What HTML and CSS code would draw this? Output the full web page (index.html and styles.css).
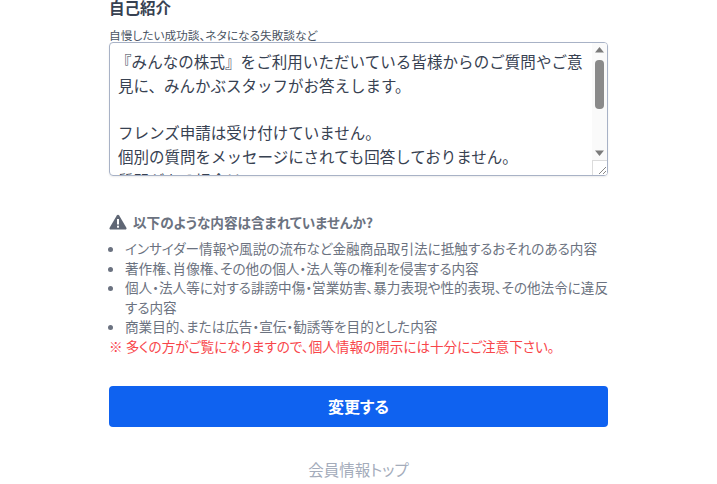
FILE: index.html
```html
<!DOCTYPE html>
<html lang="ja">
<head>
<meta charset="utf-8">
<title>自己紹介</title>
<link rel="stylesheet" href="styles.css">
</head>
<body>
<main class="page">
  <h2 class="title">自己紹介</h2>
  <p class="hint">自慢したい成功談、ネタになる失敗談など</p>
  <div class="textarea">
    <div class="textarea-text"><span class="first-line">『みんなの株式』をご利用いただいている皆様からのご質問やご意</span><br>見に、みんかぶスタッフがお答えします。<br><br>フレンズ申請は受け付けていません。<br>個別の質問をメッセージにされても回答しておりません。<br>質問がある場合は</div>
    <div class="scrollbar">
      <svg class="arrow" width="15" height="14" viewBox="0 0 15 14"><path d="M3 9.500 7.500 4 12 9.500z" fill="#7b7b7b"/></svg>
      <div class="track"><div class="thumb"></div></div>
      <svg class="arrow" width="15" height="14" viewBox="0 0 15 14"><path d="M3 4.500h9L7.500 10z" fill="#7b7b7b"/></svg>
      <div class="corner"><svg width="14" height="14" viewBox="0 0 14 14"><path d="M13 6 6 13M13 10l-3 3" stroke="#888" stroke-width="1" fill="none"/></svg></div>
    </div>
  </div>
  <section class="notice">
    <h3 class="notice-title">
      <svg width="18" height="16" viewBox="0 0 18 16"><path d="M9 .8c.5 0 .9.3 1.200.7l7.200 12.200c.5.900-.1 1.900-1.200 1.900H1.800C.7 15.600.1 14.600.6 13.700L7.800 1.500C8.100 1.100 8.500.8 9 .8z" fill="#5f6674"/><rect x="8" y="5" width="2" height="5.500" fill="#fff"/><rect x="8" y="11.700" width="2" height="2" fill="#fff"/></svg>
      <span>以下のような内容は含まれていませんか?</span>
    </h3>
    <ul class="notice-list">
      <li>インサイダー情報や風説の流布など金融商品取引法に抵触するおそれのある内容</li>
      <li>著作権、肖像権、その他の個人・法人等の権利を侵害する内容</li>
      <li>個人・法人等に対する誹謗中傷・営業妨害、暴力表現や性的表現、その他法令に違反する内容</li>
      <li>商業目的、または広告・宣伝・勧誘等を目的とした内容</li>
    </ul>
    <p class="warning">※ 多くの方がご覧になりますので、個人情報の開示には十分にご注意下さい。</p>
  </section>
  <button class="submit" type="button">変更する</button>
  <a class="back" href="#">会員情報トップ</a>
</main>
</body>
</html>
```
FILE: styles.css
```css
* { box-sizing: border-box; }
html, body { margin: 0; height: 484px; overflow: hidden; background: #fff; }
body { font-family: "Noto Sans CJK JP", "Noto Sans", sans-serif; color: #374151; }
.page { width: 499px; margin-left: 109px; display: flex; flex-direction: column; }
.title { margin: -3px 0 0; font-size: 15.500px; line-height: 20px; font-weight: 700; color: #374151; height: 30px; font-feature-settings: "palt"; }
.hint { margin: 0; font-size: 11.700px; line-height: 15px; color: #4b5563; font-feature-settings: "palt"; }
.textarea { position: relative; height: 134px; border: 1px solid #a8b2c6; border-radius: 4px; overflow: hidden; box-shadow: 0 1px 2px rgba(0,0,0,.08); }
.textarea-text { padding: 7px 16px 0 8px; font-size: 15.500px; line-height: 23.800px; color: #374151; }
.first-line { white-space: nowrap; margin-left: -2px; letter-spacing: .07px; }
.scrollbar { position: absolute; top: 0; right: 0; bottom: 0; width: 15px; background: #fafafa; display: flex; flex-direction: column; }
.arrow { display: block; flex: none; }
.track { flex: 1; padding: 3px 3px 0; }
.thumb { height: 49px; border-radius: 4px; background: #8a8a8a; }
.corner { flex: none; height: 15px; background: #fff; border: 1px solid #dcdcdc; border-width: 1px 0 0 1px; }
.corner svg { display: block; }
.notice { margin-top: 36px; font-feature-settings: "palt"; }
.notice-title { margin: 0; display: flex; align-items: center; gap: 6px; font-size: 13.600px; line-height: 20px; font-weight: 700; color: #6b7280; }
.notice-list { margin: 7px 0 0; padding: 0 0 0 16px; font-size: 13.600px; line-height: 19.500px; color: #6b7280; }
.notice-list li::marker { color: #6b7280; }
.warning { margin: 0; font-size: 13.600px; line-height: 19.500px; color: #f8454a; }
.submit { margin-top: 30px; height: 41px; border: 0; border-radius: 4px; background: #0f62f0; color: #fff; font: 700 16px/41px "Noto Sans CJK JP", sans-serif; font-feature-settings: "palt"; padding: 0; }
.back { margin-top: 31px; text-align: center; font-size: 15.500px; line-height: 22px; color: #a4acbb; text-decoration: none; font-feature-settings: "palt"; }
```
